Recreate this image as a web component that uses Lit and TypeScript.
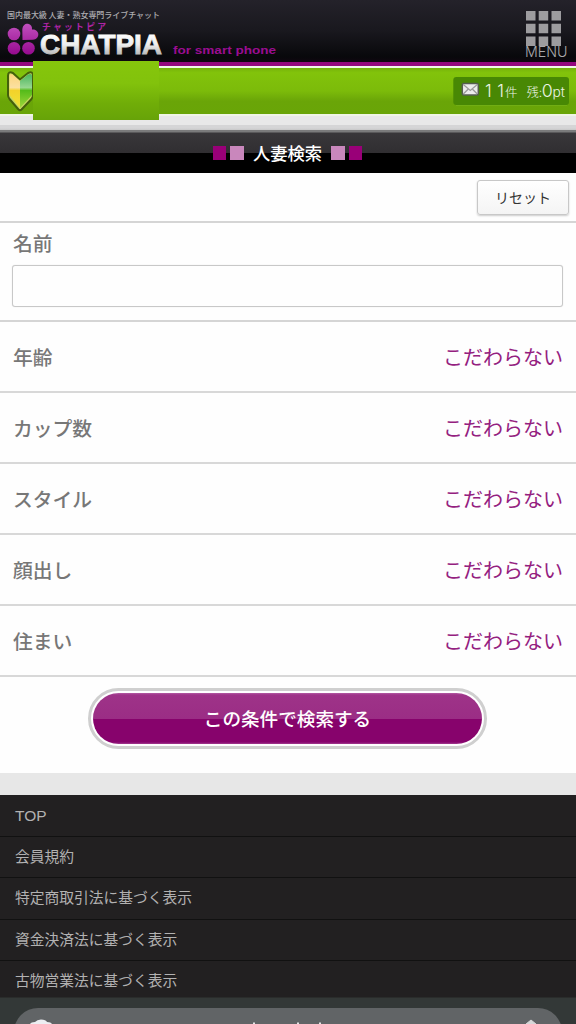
import { LitElement, html, css } from "lit";
import { customElement } from "lit/decorators.js";

const CONDITIONS = ["年齢", "カップ数", "スタイル", "顔出し", "住まい"];
const LINKS = [
  "TOP",
  "会員規約",
  "特定商取引法に基づく表示",
  "資金決済法に基づく表示",
  "古物営業法に基づく表示",
];

@customElement("chat-header")
class ChatHeader extends LitElement {
  static styles = css`
    :host { display: block; }
    svg { display: block; }
    text { font-family: "Noto Sans CJK JP", sans-serif; }
    .latin { font-family: Inter, Roboto, sans-serif; }
    .brand { font-family: "Liberation Sans", sans-serif; font-weight: 700; }
    .kana { font-family: "Liberation Sans", "Noto Sans CJK JP", sans-serif; font-weight: 700; }
    .bar {
      display: flex;
      justify-content: space-between;
      height: 62px;
      background: linear-gradient(#24222a, #19181e 50%, #08080b 92%, #100711);
      border-bottom: 4px solid #94087f;
    }
    .status {
      position: relative;
      display: flex;
      align-items: center;
      justify-content: space-between;
      box-sizing: border-box;
      height: 50px;
      padding: 0 7px 0 5px;
      border-top: 2px solid #f3f8e9;
      border-bottom: 2px solid #eff5e5;
      background: linear-gradient(#76b20b, #82c30b 10%, #7cbb0a 50%, #6aa508 72%, #69a507);
    }
    .cover {
      position: absolute;
      left: 33px;
      top: -7px;
      width: 126px;
      height: 59px;
      background: linear-gradient(#86c60c, #82c20c 38%, #70ad08 72%, #67a308);
    }
    .gap {
      height: 14px;
      background: linear-gradient(#e8e8e8 0 9px, #d5d5d6 9px 12px, #c8c8c8);
    }
  `;
  render() {
    return html`
      <div class="bar">
        <svg width="290" height="62" viewBox="0 0 290 62">
          <defs>
            <linearGradient id="petal" x1="0" y1="24" x2="0" y2="54" gradientUnits="userSpaceOnUse">
              <stop stop-color="#c04fbd" /><stop offset="1" stop-color="#970b8f" />
            </linearGradient>
            <linearGradient id="silver" x1="0" y1="33" x2="0" y2="54" gradientUnits="userSpaceOnUse">
              <stop stop-color="#fff" /><stop offset=".55" stop-color="#eee" /><stop offset="1" stop-color="#bbb" />
            </linearGradient>
          </defs>
          <text x="7" y="18.3" font-size="8" font-weight="500" fill="#aeadb1" textLength="153">国内最大級 人妻・熟女専門ライブチャット</text>
          <g fill="url(#petal)">
            <circle cx="14" cy="34" r="6.300" />
            <circle cx="14" cy="48.300" r="6.300" />
            <circle cx="28.500" cy="48.300" r="6.300" />
            <path d="M22.500 40L22.300 30C22.500 25 25.500 23.500 28 23.800C31 24.300 32.300 26.500 32 29.500C35 29 38 31 38.300 34C38.500 37.500 36 39.500 33 39.700Z" />
          </g>
          <text class="kana" x="42" y="30" font-size="8.800" fill="#ad24a5" textLength="64">チャットピア</text>
          <text class="brand" x="40" y="53.800" font-size="28.500" fill="url(#silver)" stroke="url(#silver)" stroke-width=".9" textLength="122" lengthAdjust="spacingAndGlyphs">CHATPIA</text>
          <text class="brand" x="173" y="54" font-size="11.800" fill="#9b0d91" textLength="103" lengthAdjust="spacingAndGlyphs">for smart phone</text>
        </svg>
        <svg width="56" height="62" viewBox="520 0 56 62">
          <path fill="#9d9c9f" d="M526 11h9.500v9.500h-9.500zM538.700 11h9.500v9.500h-9.500zM551.500 11h9.500v9.500h-9.500zM526 23.700h9.500v9.500h-9.500zM538.700 23.700h9.500v9.500h-9.500zM551.500 23.700h9.500v9.500h-9.500zM526 36.500h9.500v9.500h-9.500zM538.700 36.500h9.500v9.500h-9.500zM551.500 36.500h9.500v9.500h-9.500z" />
          <text class="latin" x="525" y="56.700" font-size="14.800" font-weight="300" fill="#aaa9ac" textLength="42.500" lengthAdjust="spacingAndGlyphs">MENU</text>
        </svg>
      </div>
      <div class="status">
        <svg width="30" height="44" viewBox="5 69 30 44">
          <defs>
            <linearGradient id="leafL" x1="0" y1="72" x2="0" y2="109" gradientUnits="userSpaceOnUse">
              <stop stop-color="#fbd377" /><stop offset=".42" stop-color="#fbe0a0" /><stop offset=".5" stop-color="#f3d22a" /><stop offset="1" stop-color="#eee53a" />
            </linearGradient>
            <linearGradient id="leafR" x1="0" y1="72" x2="0" y2="109" gradientUnits="userSpaceOnUse">
              <stop stop-color="#3faf57" /><stop offset=".42" stop-color="#96d690" /><stop offset=".5" stop-color="#55bb1a" /><stop offset="1" stop-color="#a4d93c" />
            </linearGradient>
          </defs>
          <path d="M20 79.500L13 73Q8 70.500 8 76V95Q8 97 9.500 99L18.500 109.500Q20 111 21.500 109.500L31.500 99Q33 97 33 95V76Q33 70.500 28 73Z" fill="#c7d860" stroke="#44600c" stroke-width="2" />
          <path d="M20 81L12.500 74.500Q9.500 73 9.500 76V95L20 108Z" fill="url(#leafL)" />
          <path d="M20 81L28 74.500Q32 73 32 76V95L20 108Z" fill="url(#leafR)" />
        </svg>
        <svg width="116" height="30" viewBox="453 76 116 30">
          <rect x="453.300" y="77" width="115.700" height="28" rx="3" fill="#488804" />
          <path d="M456 105.500H567" stroke="#78b51c" opacity=".6" />
          <rect x="462.300" y="83.500" width="16" height="11.500" rx="1.500" fill="#ececec" stroke="#555d50" stroke-width="1.500" />
          <path d="M463.300 84.500L470.300 90.500L477.300 84.500M463.300 94L468.300 89M477.300 94L472.300 89" fill="none" stroke="#999" stroke-width="1.200" />
          <g fill="#edf5e4" font-weight="300">
            <text class="latin" x="485" y="96.800" font-size="17" textLength="19">11</text>
            <text x="505" y="96.500" font-size="12.500">件</text>
            <text x="526.800" y="96.500" font-size="12">残</text>
            <text class="latin" x="538.800" y="96.500" font-size="12">:</text>
            <text class="latin" x="541.700" y="97" font-size="17.500" textLength="11" lengthAdjust="spacingAndGlyphs">0</text>
            <text class="latin" x="552.500" y="97" font-size="13" textLength="12.500" lengthAdjust="spacingAndGlyphs">pt</text>
          </g>
        </svg>
        <div class="cover"></div>
      </div>
      <div class="gap"></div>
    `;
  }
}

@customElement("search-form")
class SearchForm extends LitElement {
  static styles = css`
    :host { display: block; background: #fefefe; }
    .title {
      box-sizing: border-box;
      height: 43px;
      display: flex;
      align-items: center;
      justify-content: center;
      gap: 4px;
      padding: 3px 1px 0 0;
      background: linear-gradient(#7b7b7c 0 2px, #39373a 3px, #302e31 23px, #000 23px);
      color: #fff;
      font-size: 17.3px;
      font-weight: 500;
      line-height: 24px;
    }
    .title span { margin: 0 5px; }
    .sq { width: 13.5px; height: 13.5px; background: #990078; }
    .sq.light { background: #c987bc; }
    .reset-row {
      display: flex;
      justify-content: flex-end;
      box-sizing: border-box;
      height: 50px;
      padding: 7px 7px 0 0;
      border-bottom: 2px solid #d5d5d5;
    }
    button { font-family: inherit; padding: 0; }
    .reset {
      box-sizing: border-box;
      width: 92px;
      height: 35px;
      border: 1.5px solid #c8c8c8;
      border-radius: 3px;
      background: linear-gradient(#fff, #f4f4f4);
      box-shadow: 0 1px 2px #ccc;
      color: #333;
      font-size: 14px;
      line-height: 20px;
      padding-bottom: 2px;
    }
    .name {
      box-sizing: border-box;
      height: 98.6px;
      padding: 5px 13px 0 12px;
      border-bottom: 2px solid #d5d5d5;
    }
    label, .label { display: block; color: #777; font-size: 19.8px; font-weight: 500; line-height: 29px; }
    label { margin-left: 1px; }
    input {
      display: block;
      box-sizing: border-box;
      width: 551px;
      height: 42px;
      margin: 8px 0 0;
      border: 1.5px solid #c8c8c8;
      border-radius: 3px;
      background: #fefefe;
      box-shadow: 0 0 1px #d2d2d2;
    }
    .row {
      box-sizing: border-box;
      height: 71.1px;
      display: flex;
      align-items: center;
      justify-content: space-between;
      padding: 0 13px;
      border-bottom: 2px solid #d8d8d8;
    }
    .value { color: #94207f; font-size: 20px; line-height: 30px; padding-top: 1px; }
    .action { height: 95.9px; display: flex; justify-content: center; padding: 11px 1px 0 0; box-sizing: border-box; }
    .ring {
      box-sizing: border-box;
      width: 399px;
      height: 61px;
      border: 3px solid #cfcfcf;
      border-radius: 31px;
      padding: 2px;
      background: #fff;
    }
    .search {
      display: block;
      width: 100%;
      height: 51px;
      border: 0;
      border-radius: 26px;
      background: linear-gradient(#b35aa4 0, #9e3388 2px, #9b2d85 26px, #87036c 26px, #87036c 49px, #a23b90);
      color: #fff;
      font-size: 18.6px;
      font-weight: 500;
      line-height: 28px;
      padding-bottom: 1px;
    }
  `;
  render() {
    return html`
      <div class="title">
        <i class="sq"></i><i class="sq light"></i><span>人妻検索</span><i class="sq light"></i><i class="sq"></i>
      </div>
      <div class="reset-row"><button class="reset">リセット</button></div>
      <div class="name"><label for="name">名前</label><input id="name" type="text" /></div>
      ${CONDITIONS.map(
        (c) => html`<div class="row"><span class="label">${c}</span><span class="value">こだわらない</span></div>`
      )}
      <div class="action"><div class="ring"><button class="search">この条件で検索する</button></div></div>
    `;
  }
}

@customElement("site-footer")
class SiteFooter extends LitElement {
  static styles = css`
    :host { display: block; border-top: 22px solid #e7e7e7; background: #222021; }
    .link {
      box-sizing: border-box;
      height: 41.6px;
      padding: 0 15px;
      border-bottom: 1.5px solid #111;
      color: #b2b1b1;
      font-family: "Liberation Sans", "Noto Sans CJK JP", sans-serif;
      font-size: 14.75px;
      line-height: 41px;
    }
    .link:first-child { font-size: 15.5px; }
  `;
  render() {
    return html`${LINKS.map((l) => html`<div class="link">${l}</div>`)}`;
  }
}

@customElement("app-root")
class AppRoot extends LitElement {
  static styles = css`
    :host {
      display: block;
      position: relative;
      width: 576px;
      height: 1024px;
      overflow: hidden;
      background: #222021;
      font-family: "Noto Sans CJK JP", sans-serif;
    }
    .browser { position: absolute; left: 0; bottom: 0; display: block; }
  `;
  render() {
    return html`
      <chat-header></chat-header>
      <search-form></search-form>
      <site-footer></site-footer>
      <svg class="browser" width="576" height="27" viewBox="0 997 576 27">
        <rect y="997.500" width="576" height="27" fill="#333837" />
        <rect x="14" y="1008" width="548" height="48" rx="24" fill="#616466" />
        <path d="M30 1024Q31 1022 35 1022Q37 1019.500 41 1019.500Q46 1019.500 47 1022Q51 1022 52 1024Z" fill="#eceef2" />
        <path d="M253 1022.500h2v2h-2zM297 1022.500h2v2h-2zM319 1022.500h2v2h-2z" fill="#e5e6e7" />
        <path d="M526 1024L531 1020L536 1024" fill="#d5d7d8" stroke="#d5d7d8" stroke-linejoin="round" />
      </svg>
    `;
  }
}
